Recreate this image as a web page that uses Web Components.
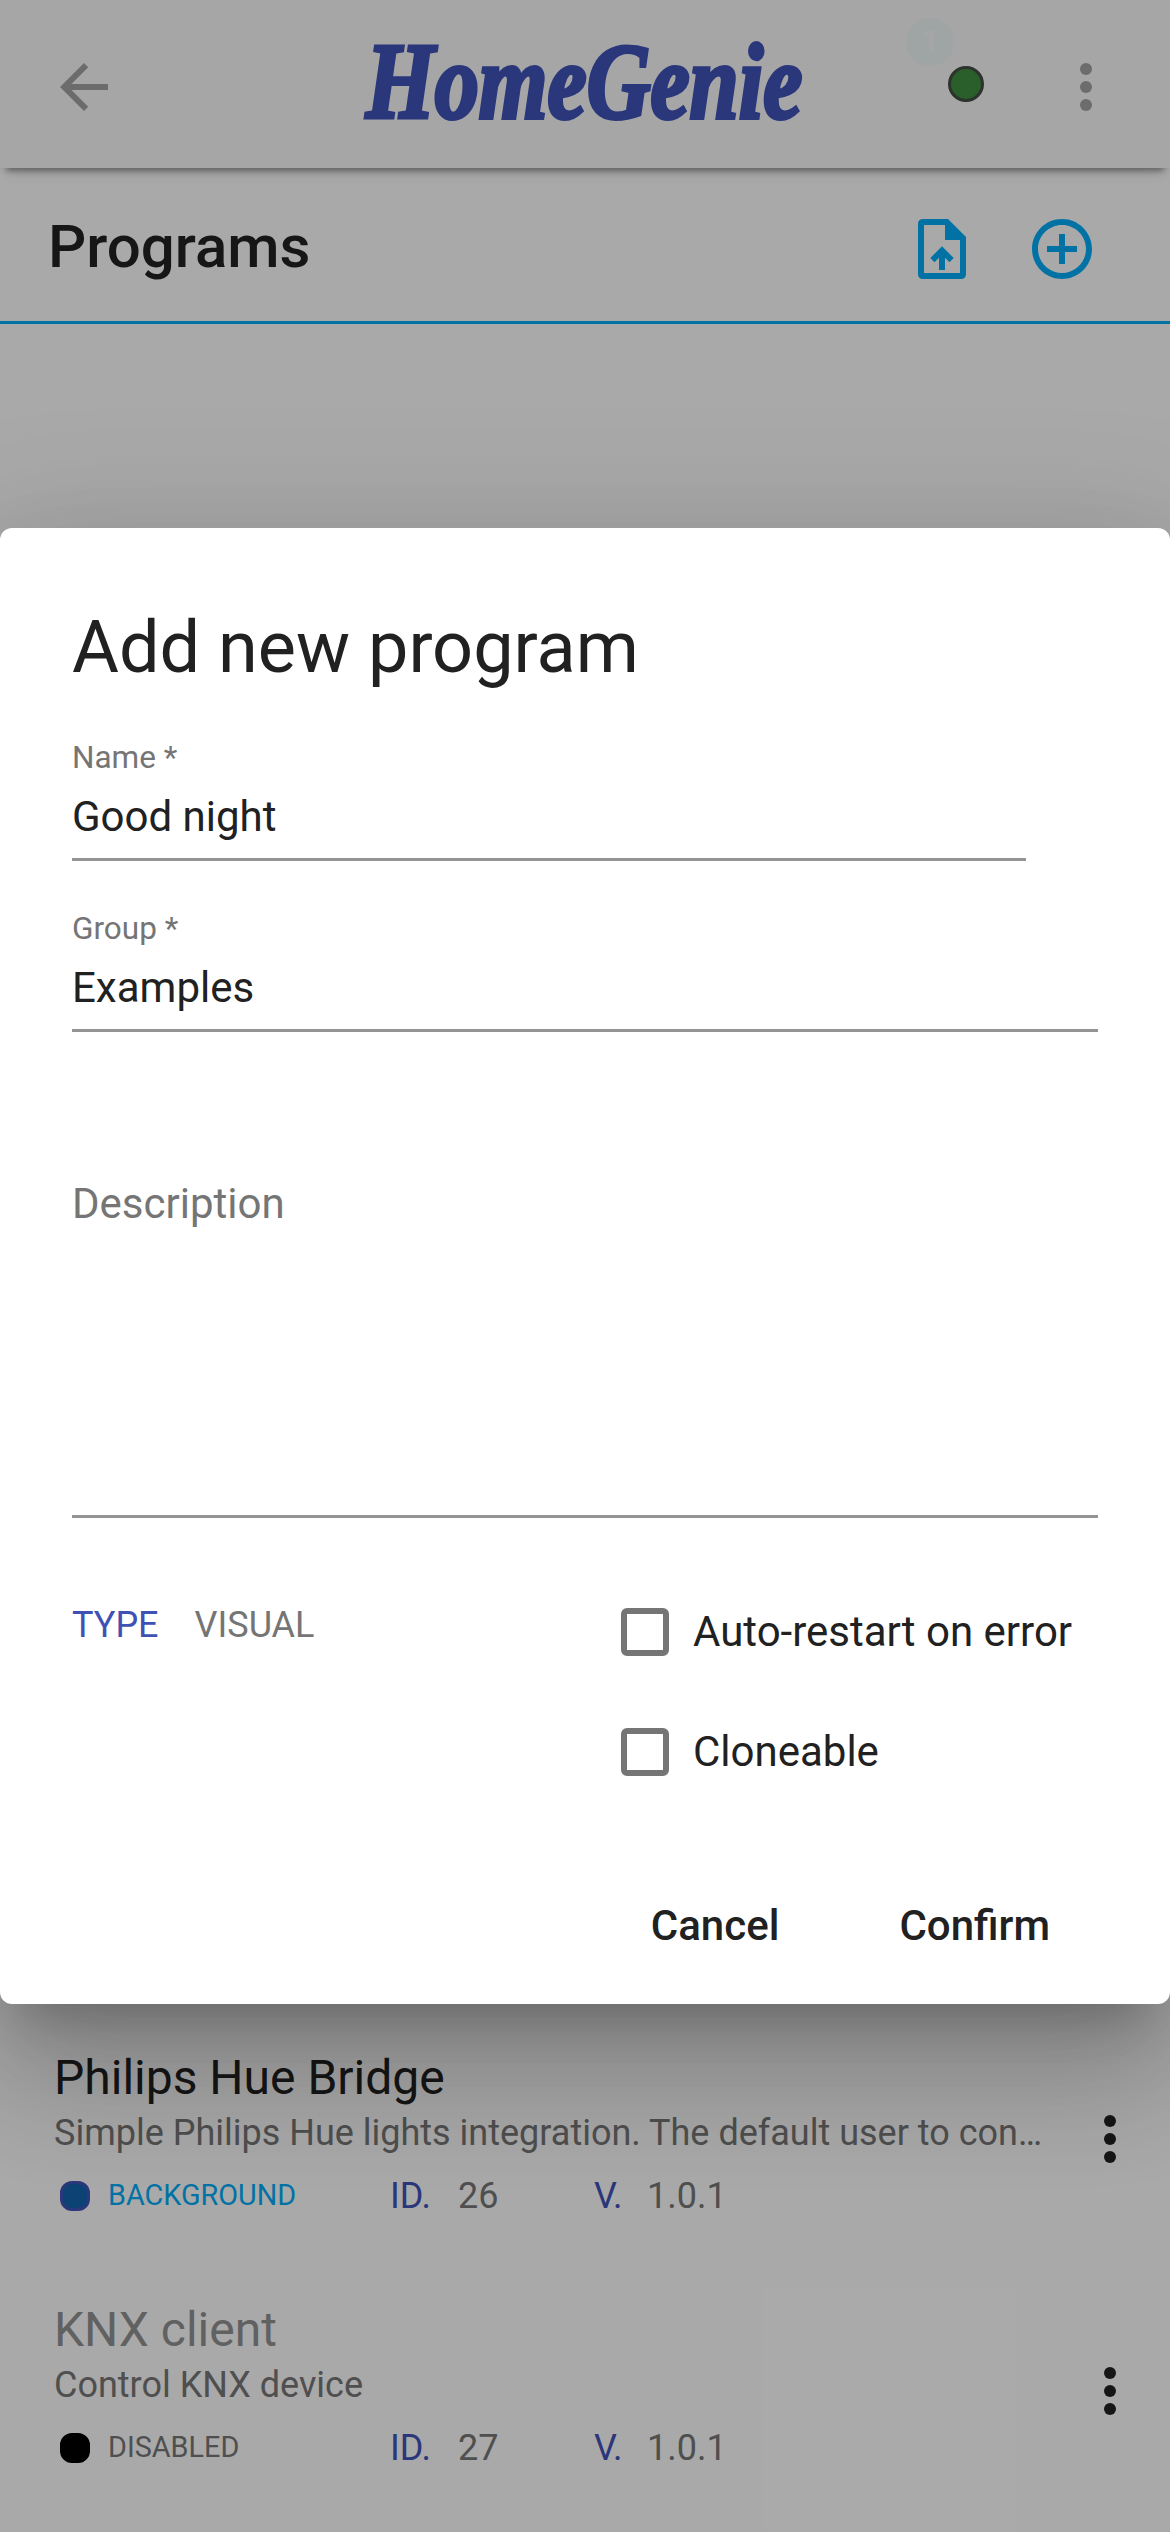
<!DOCTYPE html>
<html lang="en">
<head>
<meta charset="utf-8">
<title>HomeGenie - Programs</title>
<style>
html,body{margin:0;padding:0;background:#fafafa}
body{font-family:Roboto,sans-serif;color:#212121;width:1170px;height:2532px;overflow:hidden}
</style>
</head>
<body>
<hg-app></hg-app>
<script>
const define = (name, render) => customElements.define(name, class extends HTMLElement {
  connectedCallback() {
    if (this.shadowRoot) return;
    this.attachShadow({ mode: 'open' }).innerHTML = render(this);
  }
});
const attr = (el, n) => el.getAttribute(n) || '';

const ICONS = {
  back: '<path d="M20 11H7.83l5.59-5.59L12 4l-8 8 8 8 1.41-1.41L7.83 13H20v-2z"/>',
  more: '<circle cx="12" cy="6" r="2"/><circle cx="12" cy="12" r="2"/><circle cx="12" cy="18" r="2"/>',
  upload: '<path fill-rule="evenodd" d="M5.7 2H14L20 8V20.300Q20 22 18.300 22H5.700Q4 22 4 20.300V3.700Q4 2 5.700 2ZM6 4V20H18V9H13V4Z"/><path d="M12 11.100L15.900 15L14.500 16.400L13 14.950V19H11V14.950L9.500 16.400L8.100 15Z"/>',
  add: '<path d="M13 7h-2v4H7v2h4v4h2v-4h4v-2h-4V7zm-1-5C6.480 2 2 6.480 2 12s4.480 10 10 10 10-4.480 10-10S17.520 2 12 2zm0 18c-4.410 0-8-3.590-8-8s3.590-8 8-8 8 3.590 8 8-3.590 8-8 8z"/>'
};
define('hg-icon', el => `
  <style>:host{display:block;width:72px;height:72px;flex:none}svg{display:block;width:100%;height:100%;fill:currentColor}</style>
  <svg viewBox="0 0 24 24">${ICONS[attr(el, 'name')]}</svg>`);

define('hg-logo', () => `
  <style>:host{display:block;width:438px;height:168px}
  span{display:inline-block;font:italic 700 107px/165px "Liberation Serif",serif;color:#3f51b5;-webkit-text-stroke:4px #3f51b5;paint-order:stroke;stroke-linejoin:round;transform:scaleX(.825);transform-origin:0 0}</style>
  <span>HomeGenie</span>`);

define('hg-status', () => `
  <style>
  :host{display:block;position:relative;width:36px;height:36px}
  .dot{box-sizing:border-box;width:36px;height:36px;border-radius:50%;border:3px solid #424a42;background:#3e8b3e}
  .badge{position:absolute;left:-42px;top:-48px;width:48px;height:48px;border-radius:50%;background:#03a9f4;color:#fff;opacity:.035;font:700 30px/46px Roboto,sans-serif;text-align:center}
  </style><div class="dot"></div><div class="badge">1</div>`);

define('hg-header', () => `
  <style>
  :host{display:flex;align-items:center;justify-content:space-between;position:relative;height:168px;flex:none;padding:0 48px;background:#f5f5f5;color:#a0a0a0;
   box-shadow:0 9px 6px -6px rgba(0,0,0,.36),0 6px 18px -6px rgba(0,0,0,.2)}
  .side{display:flex;align-items:center;width:240px;padding-top:6px}
  .end{justify-content:flex-end;gap:66px}
  hg-status{margin-top:-6px}
  </style>
  <div class="side"><hg-icon name="back"></hg-icon></div>
  <hg-logo></hg-logo>
  <div class="side end"><hg-status></hg-status><hg-icon name="more"></hg-icon></div>`);

define('hg-title-bar', () => `
  <style>
  :host{display:flex;align-items:center;box-sizing:border-box;height:156px;flex:none;padding:9px 72px 0 48px;border-bottom:3px solid #03a9f4}
  h1{margin:0 auto 0 0;font-weight:500;font-size:60px;line-height:72px;padding-bottom:5px}
  .actions{display:flex;gap:48px;color:#03a9f4}
  </style>
  <h1><slot></slot></h1><div class="actions"><hg-icon name="upload"></hg-icon><hg-icon name="add"></hg-icon></div>`);

define('hg-program', el => `
  <style>
  :host{display:flex;align-items:flex-start;box-sizing:border-box;height:252px;padding:32px 24px 0 54px}
  .body{width:1000px;margin-right:auto}
  .name{font-size:48px;line-height:60px}
  :host([off]) .name{color:#909090}
  .desc{font-size:36px;line-height:48px;margin-top:1px;color:#757575;white-space:nowrap}
  .meta{display:grid;grid-template-columns:54px 282px 68px 136px 53px auto;align-items:center;margin-top:15px;font-size:36px;line-height:48px;color:#757575}
  .dot{box-sizing:border-box;width:30px;height:30px;margin-left:6px;border-radius:12px;border:3px solid #3f51b5;background:#1263ab}
  .state{font-size:28.800px;line-height:46px;padding-bottom:2px;color:#03a9f4}
  .key{color:#3f51b5}
  :host([off]) .dot{background:#000;border-color:#000}
  :host([off]) .state{color:#757575}
  hg-icon{margin-top:55px}
  </style>
  <div class="body">
    <div class="name">${attr(el, 'name')}</div>
    <div class="desc"><slot></slot></div>
    <div class="meta"><span class="dot"></span><span class="state">${attr(el, 'state')}</span>
      <span class="key">ID.</span><span>${attr(el, 'pid')}</span><span class="key">V.</span><span>${attr(el, 'version')}</span></div>
  </div>
  <hg-icon name="more"></hg-icon>`);

define('hg-field', () => `
  <style>
  :host{display:flex;flex-direction:column;box-sizing:border-box;height:171px;border-bottom:3px solid #949494}
  .label{font-size:31.500px;line-height:36px;margin-top:50px;color:#757575}
  .value{font-size:42px;line-height:48px;margin-top:17px}
  </style>
  <div class="label"><slot name="label"></slot></div><div class="value"><slot></slot></div>`);

define('hg-textarea', () => `
  <style>:host{display:block;box-sizing:border-box;height:486px;padding-top:148px;border-bottom:3px solid #949494;font-size:42px;line-height:48px;color:#757575}</style>
  <slot></slot>`);

define('hg-checkbox', () => `
  <style>
  :host{display:flex;align-items:center;gap:24px;height:48px;font-size:42px;line-height:48px;white-space:nowrap}
  .box{box-sizing:border-box;width:48px;height:48px;border:6px solid #757575;border-radius:6px}
  </style><span class="box"></span><span><slot></slot></span>`);

define('hg-button', () => `
  <style>:host{display:block}button{display:block;border:0;background:none;color:inherit;height:108px;padding:0 48px;font:500 42px/108px Roboto,sans-serif}</style>
  <button><slot></slot></button>`);

define('hg-dialog', () => `
  <style>
  :host{position:absolute;inset:0;display:flex;flex-direction:column;align-items:stretch;justify-content:center;background:rgba(0,0,0,.32)}
  .panel{box-sizing:border-box;height:1476px;padding:72px 72px 24px;display:flex;flex-direction:column;background:#fff;border-radius:12px;
   box-shadow:0 33px 45px -21px rgba(0,0,0,.2),0 72px 114px 9px rgba(0,0,0,.14),0 27px 138px 24px rgba(0,0,0,.12)}
  h2{margin:0;font-weight:400;font-size:72px;line-height:96px;margin-bottom:-6px}
  .actions{display:flex;justify-content:flex-end;gap:24px;margin-top:auto}
  </style>
  <div class="panel"><h2><slot name="title"></slot></h2><slot></slot><div class="actions"><slot name="actions"></slot></div></div>`);

define('hg-program-form', () => `
  <style>
  :host{display:flex;flex-direction:column}
  .name{margin-right:72px}
  .options{display:flex;justify-content:space-between;padding-top:90px}
  .type{display:flex;gap:36px;font-size:36px;line-height:35px;color:#757575}
  .type b{font-weight:400;color:#3f51b5}
  .checks{display:flex;flex-direction:column;gap:72px;width:477px}
  </style>
  <hg-field class="name"><span slot="label">Name *</span>Good night</hg-field>
  <hg-field><span slot="label">Group *</span>Examples</hg-field>
  <hg-textarea>Description</hg-textarea>
  <div class="options">
    <div class="type"><b>TYPE</b><span>VISUAL</span></div>
    <div class="checks"><hg-checkbox>Auto-restart on error</hg-checkbox><hg-checkbox>Cloneable</hg-checkbox></div>
  </div>`);

define('hg-app', () => `
  <style>
  :host{display:flex;flex-direction:column;position:relative;width:1170px;height:2532px;overflow:hidden;background:#fafafa}
  .list{flex:1;display:flex;flex-direction:column;justify-content:flex-end;padding-bottom:12px}
  </style>
  <hg-header></hg-header>
  <hg-title-bar>Programs</hg-title-bar>
  <div class="list">
    <hg-program name="Philips Hue Bridge" state="BACKGROUND" pid="26" version="1.0.1">Simple Philips Hue lights integration. The default user to con…</hg-program>
    <hg-program off name="KNX client" state="DISABLED" pid="27" version="1.0.1">Control KNX device</hg-program>
  </div>
  <hg-dialog>
    <span slot="title">Add new program</span>
    <hg-program-form></hg-program-form>
    <hg-button slot="actions">Cancel</hg-button>
    <hg-button slot="actions">Confirm</hg-button>
  </hg-dialog>`);
</script>
</body>
</html>
